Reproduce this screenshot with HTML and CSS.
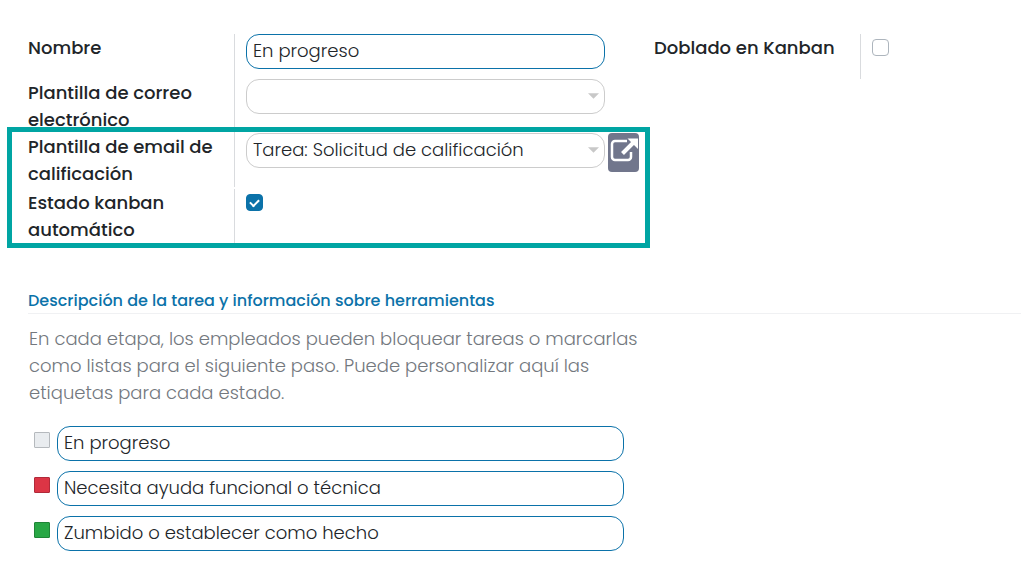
FILE: index.html
```html
<!DOCTYPE html>
<html lang="es">
<head>
<meta charset="utf-8">
<title>Etapa</title>
<link rel="stylesheet" href="styles.css">
</head>
<body>
<form class="sheet">
  <div class="groups">
    <div class="group">
      <div class="row row-short">
        <label class="label" for="name">Nombre</label>
        <div class="field"><input class="input" id="name" type="text" value="En progreso"></div>
      </div>
      <div class="row">
        <label class="label" for="mail">Plantilla de correo electrónico</label>
        <div class="field">
          <span class="picker"><select class="input select" id="mail"><option></option></select><svg class="caret" viewBox="0 0 12 6" aria-hidden="true"><path d="M0 0h12L6 6z"/></svg></span>
        </div>
      </div>
      <div class="highlight">
        <div class="row">
          <label class="label" for="rating">Plantilla de email de calificación</label>
          <div class="field">
            <span class="picker"><select class="input select" id="rating"><option>Tarea: Solicitud de calificación</option></select><svg class="caret" viewBox="0 0 12 6" aria-hidden="true"><path d="M0 0h12L6 6z"/></svg></span>
            <button class="open" type="button" aria-label="Abrir plantilla">
              <svg viewBox="0 0 31 39" aria-hidden="true"><path class="frame" d="M19 8H7a3 3 0 0 0-3 3v13a3 3 0 0 0 3 3h13a3 3 0 0 0 3-3V19"/><path class="shaft" d="M14.500 20.500L26 9"/><path class="head" d="M19.500 5.500H30V16z"/></svg>
            </button>
          </div>
        </div>
        <div class="row">
          <label class="label" for="auto">Estado kanban automático</label>
          <div class="field"><input class="check" id="auto" type="checkbox" checked></div>
        </div>
      </div>
    </div>
    <div class="group">
      <div class="row row-short">
        <label class="label" for="fold">Doblado en Kanban</label>
        <div class="field"><input class="check" id="fold" type="checkbox"></div>
      </div>
    </div>
  </div>

  <h2 class="title">Descripción de la tarea y información sobre herramientas</h2>
  <p class="help">En cada etapa, los empleados pueden bloquear tareas o marcarlas<br>como listas para el siguiente paso. Puede personalizar aquí las<br>etiquetas para cada estado.</p>
  <div class="states">
    <div class="state"><span class="swatch gray"></span><input class="input" type="text" aria-label="Estado gris" value="En progreso"></div>
    <div class="state"><span class="swatch red"></span><input class="input" type="text" aria-label="Estado rojo" value="Necesita ayuda funcional o técnica"></div>
    <div class="state"><span class="swatch green"></span><input class="input" type="text" aria-label="Estado verde" value="Zumbido o establecer como hecho"></div>
  </div>
</form>
</body>
</html>
```
FILE: styles.css
```css
* { box-sizing: border-box; }
body {
  margin: 0;
  background: #fff;
  color: #212529;
  font-family: Poppins, Inter, "Open Sans", sans-serif;
  font-size: 18px;
  font-weight: 300;
  line-height: 27px;
}
.sheet { padding: 34px 0 14px 28px; }
.groups {
  display: grid;
  grid-template-columns: 611fr 367fr;
  column-gap: 15px;
}
.row {
  display: grid;
  grid-template-columns: 207px 1fr;
  min-height: 54px;
}
.row-short { min-height: 45px; }
.label {
  font-weight: 500;
  border-right: 1px solid #d9dbde;
  padding-right: 12px;
}
.field {
  display: flex;
  align-items: flex-start;
  gap: 3px;
  padding-left: 11px;
}
.field > .input, .picker { flex: 1; min-width: 0; }
.group:first-child .field { padding-right: 34px; }
.group:first-child .field:has(.open) { padding-right: 0; }
.input {
  display: block;
  width: 100%;
  height: 35px;
  padding: 0 6px 2px;
  border: 1px solid #0b72a9;
  border-radius: 13px;
  background: #fff;
  color: #212529;
  font: inherit;
}
.picker { position: relative; }
.select { appearance: none; border-color: #ccc; }
.caret {
  position: absolute;
  right: 6px;
  top: 14px;
  width: 11px;
  height: 6px;
  fill: #c8c8c8;
  pointer-events: none;
}
.open {
  flex: none;
  width: 31px;
  height: 39px;
  padding: 0;
  border: 0;
  border-radius: 4px;
  background: #71768c;
}
.open svg { display: block; width: 31px; height: 39px; }
.frame, .shaft { fill: none; stroke: #fff; stroke-width: 2.500; }
.shaft { stroke-width: 4; }
.head { fill: #fff; }
.highlight {
  position: relative;
  display: grid;
  row-gap: 2px;
}
.highlight::after {
  content: "";
  position: absolute;
  inset: -6px -11px -5px -21px;
  border: 5px solid #00a5a3;
  pointer-events: none;
}
.check {
  appearance: none;
  width: 17px;
  height: 17px;
  margin: 5px 0 0;
  border: 1px solid #adb5bd;
  border-radius: 4px;
  background: #fff;
}
.check:checked {
  border-color: #0b72a9;
  background: #0b72a9;
  display: grid;
  place-items: center;
}
.check:checked::before {
  content: "";
  width: 7px;
  height: 4px;
  margin-bottom: 2px;
  border: solid #fff;
  border-width: 0 0 2px 2px;
  transform: rotate(-45deg);
}
.title {
  margin: 45px 0 11px;
  border-bottom: 1px solid #f0f1f3;
  color: #0b72a9;
  font-size: 16px;
  font-weight: 500;
  line-height: 25px;
}
.help { margin: 0 0 20px; padding-left: 1px; color: #73787e; }
.states {
  display: grid;
  gap: 10px;
  width: 60%;
  padding-left: 6px;
}
.state {
  display: grid;
  grid-template-columns: 16px 1fr;
  column-gap: 7px;
}
.swatch {
  width: 16px;
  height: 16px;
  margin-top: 6px;
  border: 1px solid #b5b9bd;
  border-radius: 1px;
}
.gray { background: #e9ecef; }
.red { background: #dc3545; border-color: #b02a3a; }
.green { background: #28a745; border-color: #1f8437; }
```
